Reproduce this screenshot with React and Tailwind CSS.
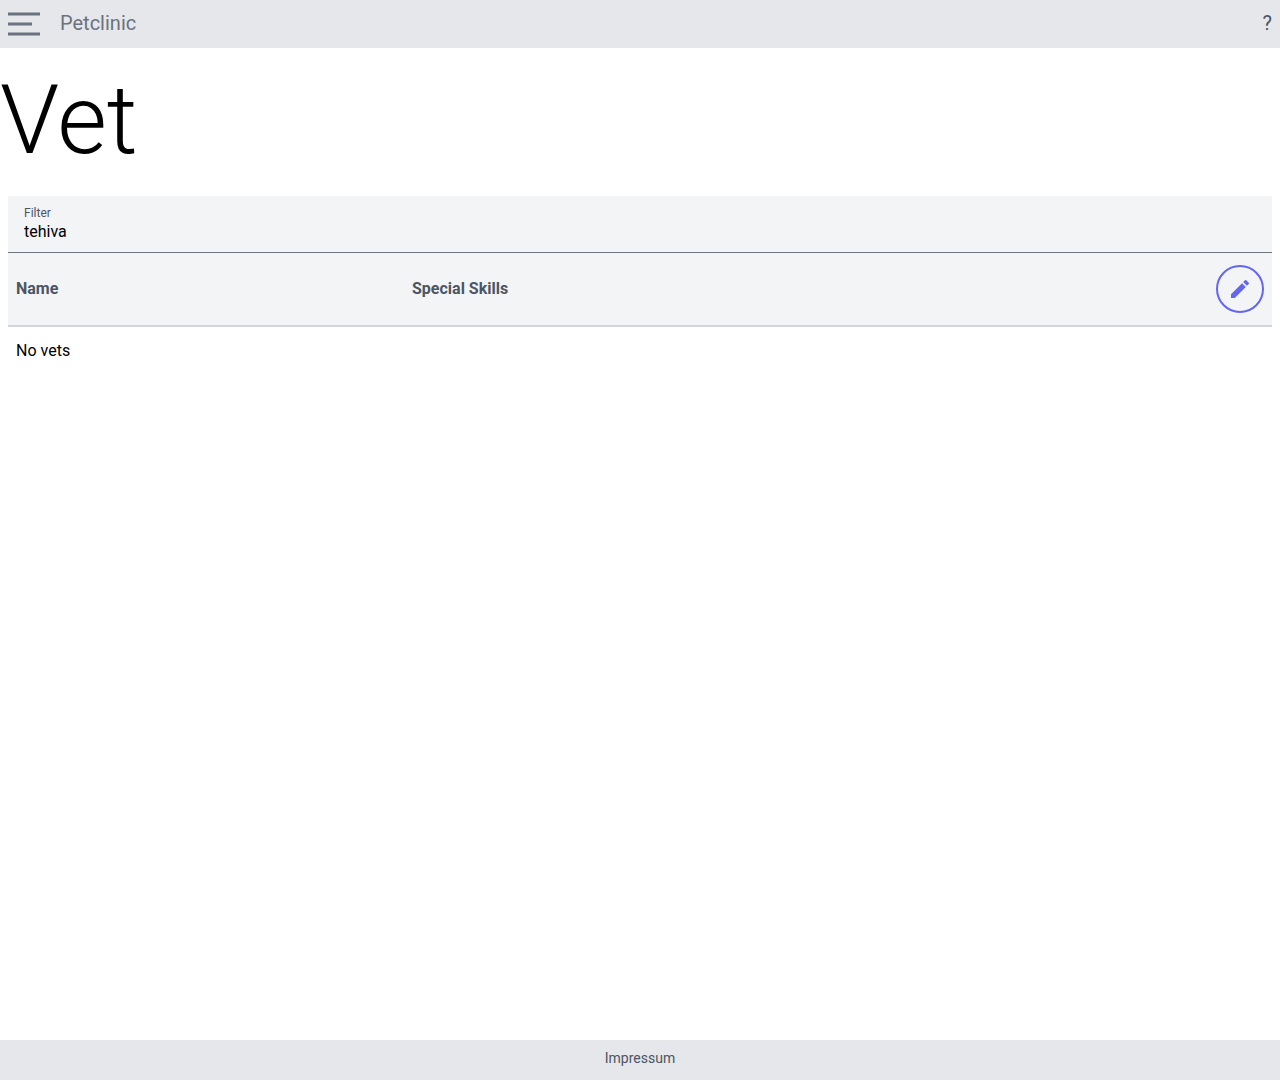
import { MdEdit } from "react-icons/md";

export default function App() {
  return (
    <div className="flex min-h-screen flex-col bg-white font-['Roboto',sans-serif] text-base text-black">
      <header className="flex h-12 items-center bg-[#e5e7eb] px-2 text-[#6b7280]">
        <button type="button" aria-label="Menu" className="h-8 w-8">
          <svg viewBox="0 0 32 32" className="h-8 w-8" stroke="currentColor" strokeWidth="3">
            <path d="M0 6h32M0 16h24M0 26h32" />
          </svg>
        </button>
        <a href="#home" className="ml-5 pb-0.5 text-xl">Petclinic</a>
        <a href="#help" className="ml-auto pb-0.5 text-xl text-[#4b5563]">?</a>
      </header>
      <main className="flex-1">
        <h1 className="py-6 text-8xl leading-none font-light">Vet</h1>
        <div className="mx-2 mt-1">
          <div className="flex h-[57px] flex-col border-b border-[#6b7280] bg-[#f3f4f6] px-4 pt-2">
            <label htmlFor="filter" className="text-xs leading-[18px] text-[#4b5563]">Filter</label>
            <input id="filter" type="text" defaultValue="tehiva" className="h-5 w-full bg-transparent leading-5 outline-none" />
          </div>
          <table className="w-full table-fixed border-collapse">
            <thead>
              <tr className="h-[73px] border-b-2 border-[#d1d5db] bg-[#f3f4f6] text-left text-[#4b5563]">
                <th className="w-[396px] px-2 font-bold">Name</th>
                <th className="px-2 font-bold">Special Skills</th>
                <th className="w-16 px-2">
                  <button type="button" aria-label="Edit" className="flex h-12 w-12 items-center justify-center rounded-full border-2 border-[#6366f1] text-[#6366f1]">
                    <MdEdit className="h-6 w-6" />
                  </button>
                </th>
              </tr>
            </thead>
            <tbody>
              <tr>
                <td colSpan={3} className="px-2 py-3">No vets</td>
              </tr>
            </tbody>
          </table>
        </div>
      </main>
      <footer className="flex h-10 items-center justify-center bg-[#e5e7eb] pb-1 text-sm text-[#4b5563]">
        <a href="#impressum">Impressum</a>
      </footer>
    </div>
  );
}
